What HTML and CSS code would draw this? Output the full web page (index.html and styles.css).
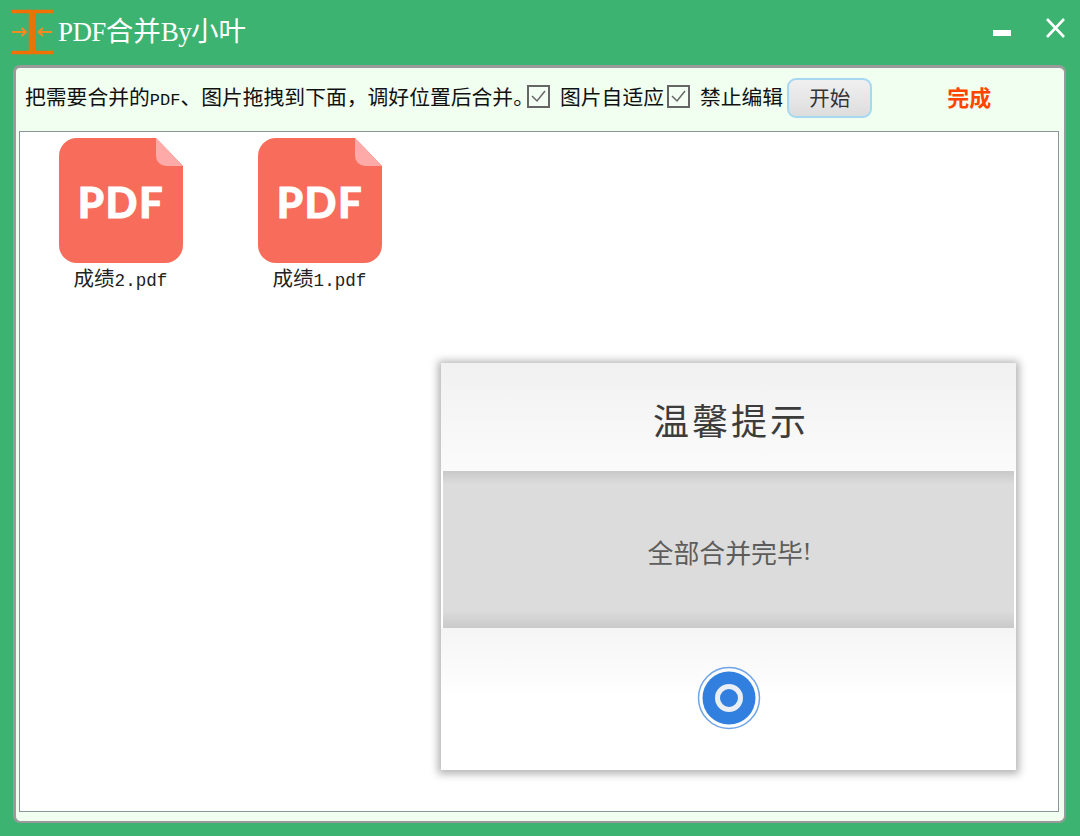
FILE: index.html
```html
<!DOCTYPE html>
<html lang="zh-CN">
<head>
<meta charset="utf-8">
<title>PDF合并By小叶</title>
<link rel="stylesheet" href="styles.css">
</head>
<body>
<div class="app">
  <header class="titlebar">
    <svg class="logo" width="44" height="48" viewBox="0 0 44 48" fill="none">
      <path d="M1 3.5H20.5V44.5H1M43 3.5H24V44.5H43" stroke="#f07000" stroke-width="3.4"/>
      <path d="M2 24H16M11.5 20l4.5 4-4.5 4M42 24H29M33 20l-4.5 4 4.5 4" stroke="#f58a1f" stroke-width="2"/>
    </svg>
    <h1 class="app-title"><span class="latin">PDF</span>合并<span class="latin">By</span>小叶</h1>
    <div class="win-controls">
      <svg class="win-min" width="18" height="6" viewBox="0 0 18 6"><rect width="18" height="6" fill="#fff"/></svg>
      <svg class="win-close" width="21" height="20" viewBox="0 0 21 20"><path d="M2 1L19 19M19 1L2 19" stroke="#fff" stroke-width="2.6"/></svg>
    </div>
  </header>
  <main class="panel">
    <div class="toolbar">
      <span class="hint">把需要合并的<span class="mono">PDF</span>、图片拖拽到下面，调好位置后合并。</span>
      <span class="check"><svg width="15" height="13" viewBox="0 0 15 13" fill="none"><path d="M1 6l5 5 8-10" stroke="#666" stroke-width="1.5"/></svg></span>
      <span class="check-label first">图片自适应</span>
      <span class="check"><svg width="15" height="13" viewBox="0 0 15 13" fill="none"><path d="M1 6l5 5 8-10" stroke="#666" stroke-width="1.5"/></svg></span>
      <span class="check-label">禁止编辑</span>
      <button class="start" type="button">开始</button>
      <span class="status">完成</span>
    </div>
    <section class="files">
      <div class="file">
        <svg class="pdf-icon" width="124" height="125" viewBox="0 0 124 125">
          <path d="M18 0H97L124 28V107A18 18 0 0 1 106 125H18A18 18 0 0 1 0 107V18A18 18 0 0 1 18 0Z" fill="#f76c5a"/>
          <path d="M97 0L124 28H107A10 10 0 0 1 97 18Z" fill="#fdaaa8"/>
          <text class="pdf-text" x="62" y="80" text-anchor="middle">PDF</text>
        </svg>
        <span class="file-name">成绩<span class="mono">2.pdf</span></span>
      </div>
      <div class="file">
        <svg class="pdf-icon" width="124" height="125" viewBox="0 0 124 125">
          <path d="M18 0H97L124 28V107A18 18 0 0 1 106 125H18A18 18 0 0 1 0 107V18A18 18 0 0 1 18 0Z" fill="#f76c5a"/>
          <path d="M97 0L124 28H107A10 10 0 0 1 97 18Z" fill="#fdaaa8"/>
          <text class="pdf-text" x="62" y="80" text-anchor="middle">PDF</text>
        </svg>
        <span class="file-name">成绩<span class="mono">1.pdf</span></span>
      </div>
      <div class="dialog">
        <div class="dialog-head">温馨提示</div>
        <div class="dialog-body">全部合并完毕<span class="latin">!</span></div>
        <div class="dialog-foot">
          <svg width="64" height="64" viewBox="0 0 64 64">
            <circle cx="32" cy="32" r="30.5" fill="none" stroke="#6fa4e8" stroke-width="1.5"/>
            <circle cx="32" cy="32" r="26.5" fill="#317fdf"/>
            <circle cx="32" cy="32" r="11.5" fill="none" stroke="#eaeef5" stroke-width="5"/>
          </svg>
        </div>
      </div>
    </section>
  </main>
</div>
</body>
</html>
```
FILE: styles.css
```css
* { box-sizing: border-box; }
html, body { margin: 0; height: 100%; }
body {
  background: #3cb371;
  font-family: "Liberation Serif", "Noto Sans CJK SC", serif;
  overflow: hidden;
}
.app { width: 1080px; height: 836px; display: flex; flex-direction: column; }
.titlebar {
  height: 65px;
  flex: none;
  display: flex;
  align-items: flex-start;
  padding: 8px 14px 0 10px;
  color: #fff;
}
.logo { flex: none; margin-right: 4px; }
.app-title {
  margin: 5px 0 0;
  font-size: 27.5px;
  line-height: 38px;
  font-weight: 400;
  white-space: nowrap;
}
.latin { font-family: "Liberation Serif", serif; }
.mono { font-family: "Liberation Mono", monospace; }
.app-title .latin { font-size: 27px; letter-spacing: -0.6px; }
.win-controls { margin-left: auto; display: flex; align-items: flex-start; gap: 34px; }
.win-min { margin-top: 22px; }
.win-close { margin-top: 10px; }

.panel {
  margin: 0 14px 13px 13px;
  flex: 1;
  min-height: 0;
  background: #f0fff0;
  border: 2px solid #9a9a9a;
  border-top-width: 3px;
  border-left-width: 3px;
  border-radius: 7px;
  padding: 0 5px 9px 3px;
  display: flex;
  flex-direction: column;
}
.toolbar {
  height: 63px;
  flex: none;
  display: flex;
  align-items: center;
  padding: 0 0 4px 6px;
  font-family: "Noto Sans CJK SC", sans-serif;
  font-size: 20.8px;
  color: #111;
  white-space: nowrap;
}
.hint { width: 502px; flex: none; margin-bottom: 4px; }
.hint .mono { font-size: 17px; }
.check {
  width: 23px;
  height: 23px;
  flex: none;
  margin-bottom: 2px;
  border: 2px solid #666;
  background: #f4fff4;
  display: flex;
  align-items: center;
  justify-content: center;
}
.check-label { margin-left: 10px; margin-bottom: 4px; flex: none; }
.check-label.first { margin-right: 3px; }
.start {
  width: 85px;
  height: 40px;
  flex: none;
  margin-left: 4px;
  border: 2px solid #a6d8f2;
  border-radius: 9px;
  background: linear-gradient(#f0f0f0, #dddddd);
  color: #333;
  font-family: inherit;
  font-size: 20.5px;
  padding: 0 0 2px;
}
.status {
  margin-left: 75px;
  margin-bottom: 4px;
  color: #ff4500;
  font-size: 22px;
  font-weight: 700;
}

.files {
  position: relative;
  flex: 1;
  min-height: 0;
  background: #fff;
  border: 1.5px solid #8b9499;
  display: flex;
  align-items: flex-start;
  padding: 6px 0 0 1px;
}
.file { width: 199px; display: flex; flex-direction: column; align-items: center; flex: none; }
.pdf-icon { display: block; }
.pdf-text {
  font-family: "Lato", sans-serif;
  font-weight: 900;
  font-size: 42px;
  letter-spacing: 1.5px;
  fill: #fff;
  stroke: #fff;
  stroke-width: 0.8px;
}
.file-name {
  margin-top: -1px;
  font-family: "Noto Sans CJK SC", sans-serif;
  font-size: 20.5px;
  line-height: 30px;
  color: #222;
}
.file-name .mono { font-size: 17.6px; }

.dialog {
  position: absolute;
  left: 421px;
  top: 231px;
  width: 575px;
  height: 407px;
  display: flex;
  flex-direction: column;
  background: #fff;
  box-shadow: 0 1px 8px 3px rgba(0, 0, 0, 0.3);
}
.dialog-head {
  height: 108px;
  flex: none;
  display: flex;
  align-items: center;
  justify-content: center;
  padding: 4px 0 0 5px;
  background: linear-gradient(#f1f1f1, #fbfbfb);
  font-size: 36px;
  letter-spacing: 3px;
  color: #3c3c3c;
}
.dialog-body {
  height: 157px;
  flex: none;
  display: flex;
  align-items: center;
  justify-content: center;
  margin-left: 2px;
  margin-right: 2px;
  background: linear-gradient(#c8c8c8, #dcdcdc 13px, #dcdcdc 140px, #c9c9c9);
  font-size: 25.9px;
  padding: 4px 0 0 2px;
  color: #5c5c5c;
}
.dialog-foot {
  flex: 1;
  display: flex;
  align-items: flex-start;
  justify-content: center;
  padding-top: 38px;
  background: linear-gradient(#f5f5f5, #ffffff 70px);
}
```
